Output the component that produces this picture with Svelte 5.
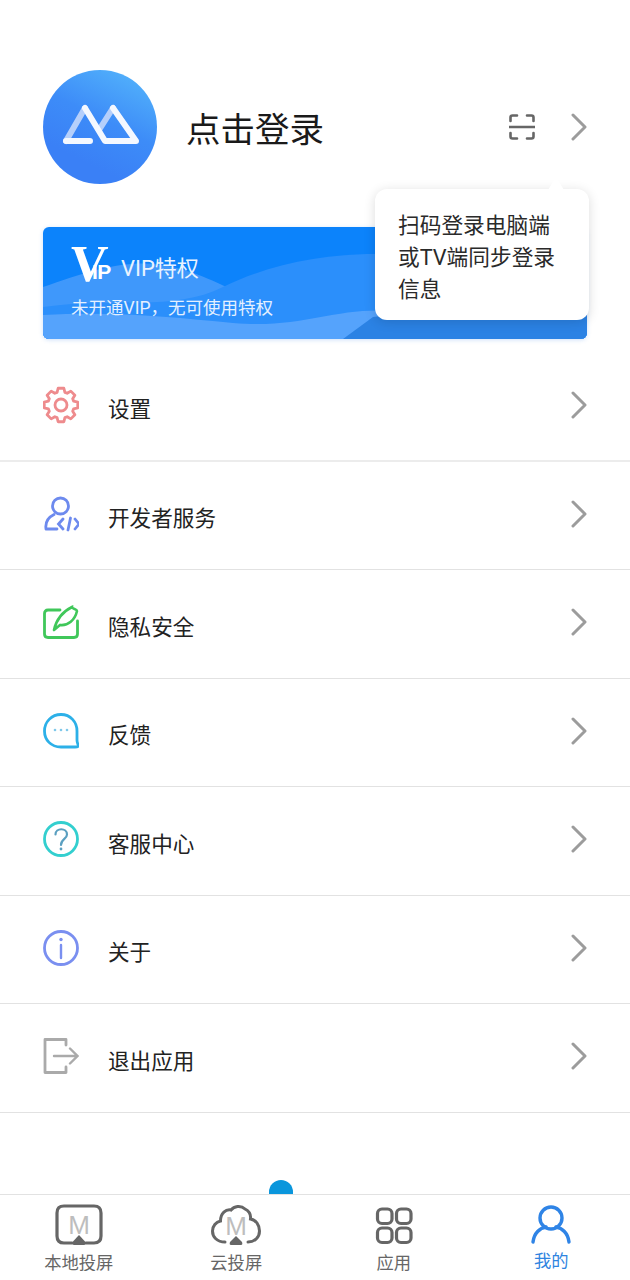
<script>
  const gear = (() => {
    const cx = 18, cy = 18, teeth = 8, ro = 17, ri = 13.2;
    let d = '';
    for (let i = 0; i < teeth; i++) {
      const a = (i / teeth) * Math.PI * 2 - Math.PI / 2;
      const pts = [[ri, -0.3], [ro, -0.17], [ro, 0.17], [ri, 0.3]];
      pts.forEach(([r, o], j) => {
        const x = (cx + r * Math.cos(a + o)).toFixed(2);
        const y = (cy + r * Math.sin(a + o)).toFixed(2);
        d += (i === 0 && j === 0 ? 'M' : 'L') + x + ' ' + y + ' ';
      });
    }
    return d + 'Z';
  })();

  const rows = [
    { key: 'gear', label: '设置' },
    { key: 'dev', label: '开发者服务' },
    { key: 'note', label: '隐私安全' },
    { key: 'chat', label: '反馈' },
    { key: 'help', label: '客服中心' },
    { key: 'info', label: '关于' },
    { key: 'exit', label: '退出应用' }
  ];
</script>

<div class="page">
  <header class="head">
    <svg class="avatar" viewBox="0 0 114 114" aria-hidden="true">
      <defs>
        <linearGradient id="av" x1="0.75" y1="0" x2="0.35" y2="0.8">
          <stop offset="0" stop-color="#52b1fb" />
          <stop offset="0.55" stop-color="#3d8cf8" />
          <stop offset="1" stop-color="#3a80f6" />
        </linearGradient>
      </defs>
      <circle cx="57" cy="57" r="57" fill="url(#av)" />
      <g fill="none" stroke-width="6" stroke-linecap="round" stroke-linejoin="round">
        <path d="M42 38 L23 71 M70 38 L56 60" stroke="#b5cffb" />
        <path d="M23 71 H47 M42 38 L62 71 H93 L70 38" stroke="#f4f8ff" />
      </g>
    </svg>
    <h1>点击登录</h1>
    <svg class="scan" viewBox="0 0 26 26" aria-hidden="true">
      <path d="M1.5 7 V3.5 Q1.5 1.5 3.5 1.5 H8 M18 1.5 H22.500 Q24.500 1.500 24.500 3.500 V7 M1.500 19 V22.500 Q1.500 24.500 3.500 24.500 H8 M18 24.500 H22.500 Q24.500 24.500 24.500 22.500 V19 M0.500 13 H25.500" fill="none" stroke="#666" stroke-width="2.600" stroke-linecap="round" />
    </svg>
    <svg class="chev" viewBox="0 0 16 28" aria-hidden="true"><path d="M2 2 L14 14 L2 26" /></svg>
  </header>

  <section class="banner">
    <svg class="waves" viewBox="0 0 544 112" preserveAspectRatio="none" aria-hidden="true">
      <path d="M0 60 C50 42 90 30 130 40 C190 55 210 85 290 90 C400 98 480 95 544 92 V112 H0 Z" fill="#3f98fb" />
      <path d="M180 60 C240 30 320 20 400 32 C470 42 510 60 544 62 V112 H0 V80 C70 70 130 85 180 60 Z" fill="#2b8ffb" />
      <path d="M0 88 C70 84 130 90 190 96 C260 102 290 80 350 84 C420 88 480 108 544 108 V112 H0 Z" fill="#55a3fc" />
      <path d="M330 90 C400 82 470 76 544 88 V112 H300 Z" fill="#2b82e4" />
    </svg>
    <div class="vip-line">
      <span class="vip-mark"><span class="v">V</span><span class="ip">IP</span></span>
      <span class="vip-title">VIP特权</span>
    </div>
    <p class="vip-sub">未开通VIP，无可使用特权</p>
  </section>

  <div class="tip">
    <span class="caret"></span>
    扫码登录电脑端<br />或TV端同步登录<br />信息
  </div>

  <nav class="menu">
    {#each rows as r}
      <div class="row">
        <span class="ico">
          {#if r.key === 'gear'}
            <svg viewBox="0 0 36 36" class="s" style="stroke:#ee8b8d"><path d={gear} stroke-linejoin="round" /><circle cx="18" cy="18" r="6" /></svg>
          {:else if r.key === 'dev'}
            <svg viewBox="0 0 36 36" class="s" style="stroke:#6d8aee">
              <circle cx="17.500" cy="10" r="8" />
              <path d="M3 33 C2 26 6 21 11 18.500 M3 33 H14 M20 23 L15.500 28 L20 33 M32 23 L36 28 L32 33 M27.500 22 L25 34" />
            </svg>
          {:else if r.key === 'note'}
            <svg viewBox="0 0 36 36" class="s" style="stroke:#40c75a">
              <path d="M17 6 H5 Q1.500 6 1.500 9.500 V30 Q1.500 33.500 5 33.500 H31 Q34.500 33.500 34.500 30 V17" />
              <path d="M11 26 C13 17 19 8 29 3 C29 5 34 5 34 7 C32 16 25 22 17 21 M11 26 L17 21" stroke-width="2.600" />
            </svg>
          {:else if r.key === 'chat'}
            <svg viewBox="0 0 36 36" class="s" style="stroke:#2cb0e8">
              <path d="M18 34 C8 34 1.500 27 1.500 18 C1.500 9 8.500 1.500 18 1.500 C27.500 1.500 34 9 34 18 V27 C34 30 35 31 35.500 33 Q35 34 32 34 Z" />
              <g fill="#7fc8ea" stroke="none"><circle cx="12" cy="17" r="1.300" /><circle cx="18" cy="17" r="1.300" /><circle cx="24" cy="17" r="1.300" /></g>
            </svg>
          {:else if r.key === 'help'}
            <svg viewBox="0 0 36 36" class="s" style="stroke:#33cfcf">
              <circle cx="18" cy="18" r="16.500" />
              <path d="M12.500 13.500 C12.500 6.500 24 6.500 24 13.500 C24 18 18 18 18 24" stroke-width="2.200" stroke="#5a9fc0" />
              <circle cx="18" cy="28" r="1.400" fill="#5a9fc0" stroke="none" />
            </svg>
          {:else if r.key === 'info'}
            <svg viewBox="0 0 36 36" class="s" style="stroke:#7a8ff0">
              <circle cx="18" cy="18" r="16.500" />
              <circle cx="18" cy="9.500" r="1.700" fill="#7a8ff0" stroke="none" />
              <path d="M18 15 V28" stroke-width="2.400" />
            </svg>
          {:else if r.key === 'exit'}
            <svg viewBox="0 0 36 38" class="s" style="stroke:#aaa">
              <path d="M23 8 V2.500 H2 V35.500 H23 V30" stroke-linejoin="round" />
              <path d="M11 19 H34 M27 11.500 L34.500 19 L27 26.500" stroke-width="2.400" />
            </svg>
          {/if}
        </span>
        <span class="label">{r.label}</span>
        <svg class="chev" viewBox="0 0 16 28" aria-hidden="true"><path d="M2 2 L14 14 L2 26" /></svg>
      </div>
    {/each}
  </nav>

  <span class="dot"></span>

  <footer class="tabs">
    <div class="tab">
      <svg viewBox="0 0 50 44" aria-hidden="true">
        <path d="M18 39 H10 Q3 39 3 32 V9 Q3 2 10 2 H40 Q47 2 47 9 V32 Q47 39 40 39 H32" fill="none" stroke="#666" stroke-width="3.200" stroke-linecap="round" />
        <text x="25" y="30" text-anchor="middle" class="m">M</text>
        <path d="M25 31 L31.500 38 Q32 41 30 41 H20 Q18 41 18.500 38 Z" fill="#666" />
      </svg>
      <span>本地投屏</span>
    </div>
    <div class="tab">
      <svg viewBox="0 0 50 44" aria-hidden="true">
        <path d="M14 38 C6 38 1.500 33 1.500 27 C1.500 22 5 18 9.500 17 C9.500 9 15 5 20 6 C23 2 30 1 34 5 C38 7 40 11 39.500 15 C45 16 48.500 21 48.500 27 C48.500 33 44 38 37 38" fill="none" stroke="#666" stroke-width="3" stroke-linecap="round" />
        <text x="25" y="31" text-anchor="middle" class="m">M</text>
        <path d="M25 32 L31 38 Q32 41 30 41 H20 Q18 41 19 38 Z" fill="#666" />
      </svg>
      <span>云投屏</span>
    </div>
    <div class="tab">
      <svg viewBox="0 0 50 44" aria-hidden="true">
        <g fill="none" stroke="#666" stroke-width="3.200">
          <rect x="8.500" y="5" width="14.500" height="14.500" rx="4.500" />
          <rect x="27.500" y="5" width="14.500" height="14.500" rx="4.500" />
          <rect x="8.500" y="24" width="14.500" height="14.500" rx="4.500" />
          <rect x="27.500" y="24" width="14.500" height="14.500" rx="4.500" />
        </g>
      </svg>
      <span>应用</span>
    </div>
    <div class="tab on">
      <svg viewBox="0 0 50 44" aria-hidden="true">
        <circle cx="25" cy="14" r="11" fill="none" stroke="#2f84e6" stroke-width="3.400" />
        <path d="M7 38 C8 29 14 24 20 23 M43 38 C42 29 36 24 30 23" fill="none" stroke="#2f84e6" stroke-width="3.400" stroke-linecap="round" />
      </svg>
      <span>我的</span>
    </div>
  </footer>
</div>

<style>
  :global(body) { margin: 0; background: #fff; }
  .page {
    position: relative;
    width: 630px;
    height: 1280px;
    overflow: hidden;
    display: flex;
    flex-direction: column;
    font-family: Roboto, "Noto Sans CJK SC", sans-serif;
    color: #222;
    background: #fff;
  }
  .head {
    display: flex;
    align-items: center;
    height: 114px;
    margin: 70px 43px 0;
  }
  .avatar { width: 114px; height: 114px; flex: none; }
  h1 {
    flex: 1;
    margin: 0 0 0 29px;
    font-size: 34.500px;
    font-weight: 400;
    color: #1a1a1a;
  }
  .scan { width: 26px; height: 26px; margin-right: 36px; flex: none; }
  .chev { width: 16px; height: 28px; flex: none; }
  .chev path { fill: none; stroke: #9c9c9c; stroke-width: 3; stroke-linecap: round; stroke-linejoin: round; }

  .banner {
    position: relative;
    height: 112px;
    margin: 43px 43px 0;
    padding: 18px 28px 0;
    box-sizing: border-box;
    border-radius: 6px;
    overflow: hidden;
    background: #0c83fb;
    color: #fff;
    box-shadow: 0 1px 4px rgba(60, 130, 230, 0.25);
  }
  .waves { position: absolute; inset: 0; width: 100%; height: 100%; }
  .vip-line { position: relative; display: flex; align-items: center; height: 40px; }
  .vip-mark { position: relative; display: block; width: 50px; height: 40px; }
  .v {
    position: absolute;
    left: -1px;
    top: -9px;
    font: 700 52px/56px "Liberation Serif", serif;
    transform: skewX(-4deg);
  }
  .ip {
    position: absolute;
    left: 21px;
    top: 15px;
    font: 700 21px/24px "Liberation Sans", sans-serif;
    letter-spacing: -0.5px;
  }
  .vip-title { font-size: 22px; margin-top: 2px; color: #e9f3ff; }
  .vip-sub {
    position: relative;
    margin: 11px 0 0;
    font-size: 17.500px;
    line-height: 24px;
    color: #e4f0ff;
  }

  .tip {
    position: absolute;
    left: 375px;
    top: 189px;
    width: 214px;
    height: 131px;
    padding: 21px 0 0 23px;
    box-sizing: border-box;
    background: #fff;
    border-radius: 12px;
    box-shadow: 0 2px 12px rgba(0, 0, 0, 0.14);
    font-size: 21.700px;
    line-height: 32px;
    color: #2a2a2a;
    z-index: 2;
  }
  .caret {
    position: absolute;
    right: 25px;
    top: -12px;
    width: 0;
    height: 0;
    border: 8px solid transparent;
    border-top: 0;
    border-bottom: 13px solid #fff;
  }

  .menu { margin: 14px 43px 0 0; }
  .row {
    display: flex;
    align-items: center;
    height: 108.500px;
    box-sizing: border-box;
    padding: 0 0 3px 43px;
    border-bottom: 1px solid #e2e2e2;
    margin-right: -43px;
    padding-right: 43px;
  }
  .row:first-child { border-bottom: 2px solid #ececec; }
  .ico { display: block; width: 36px; height: 38px; flex: none; }
  .s { display: block; width: 36px; height: 38px; fill: none; stroke-width: 2.800; stroke-linecap: round; }
  .label {
    flex: 1;
    margin: 6px 0 0 29px;
    font-size: 21.600px;
    color: #222;
  }

  .dot {
    position: absolute;
    left: 269px;
    top: 1180px;
    width: 24px;
    height: 14px;
    background: #0a96dc;
    border-radius: 12px 12px 0 0;
  }

  .tabs {
    display: grid;
    grid-template-columns: repeat(4, 1fr);
    height: 86px;
    margin-top: auto;
    border-top: 1px solid #e2e2e2;
    box-sizing: border-box;
    padding-top: 9px;
  }
  .tab {
    display: flex;
    flex-direction: column;
    align-items: center;
    font-size: 17.300px;
    color: #666;
  }
  .tab svg { width: 50px; height: 44px; display: block; }
  .tab span { line-height: 24px; margin-top: 3px; }
  .tab.on { color: #2f84e0; }
  .tab.on span { margin-top: 1px; }
  .m {
    font: 500 26px "Liberation Sans", sans-serif;
    fill: #bdbdbd;
  }
</style>
